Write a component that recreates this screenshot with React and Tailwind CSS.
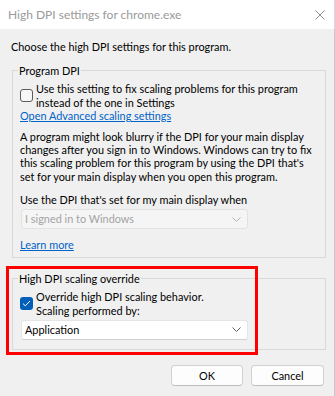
import React from "react";

const Chevron = ({ color }) => (
  <svg width="9" height="5" viewBox="0 0 9 5" fill="none">
    <path d="M0.5 0.5 L4.5 4.5 L8.5 0.5" stroke={color} strokeWidth="1" />
  </svg>
);

const Checkbox = ({ checked }) =>
  checked ? (
    <span className="flex h-[13px] w-[13px] shrink-0 items-center justify-center rounded-[3px] bg-[#005fb8]">
      <svg width="9" height="7" viewBox="0 0 9 7" fill="none">
        <path d="M1 3.6 L3.3 5.8 L8 1" stroke="#ffffff" strokeWidth="1" />
      </svg>
    </span>
  ) : (
    <span className="h-[13px] w-[13px] shrink-0 rounded-[3px] border border-[#5c5c5c] bg-[#f7f7f7]" />
  );

const GroupBox = ({ title, className, children }) => (
  <fieldset
    className={`ml-[12px] w-[314px] border border-[#d9d9d9] px-[7px] ${className}`}
  >
    <legend className="-ml-[2px] px-px text-black">{title}</legend>
    {children}
  </fieldset>
);

const App = () => {
  return (
    <div className="relative h-[396px] w-[335px] overflow-hidden bg-[#f0f0f0] font-['Lato',sans-serif] text-[10.9px] leading-[13.2px] text-black">
      <div className="flex h-[29px] items-center justify-between border-r border-[#dadada] bg-white pl-[8px] pr-[9px]">
        <span className="text-[12px] text-[#9a9a9a]">High DPI settings for chrome.exe</span>
        <svg width="10" height="10" viewBox="0 0 10 10" fill="none">
          <path d="M0.5 0.5 L9.5 9.5 M9.5 0.5 L0.5 9.5" stroke="#8f8f8f" strokeWidth="1" />
        </svg>
      </div>

      <div className="h-[367px] rounded-bl-[7px] border-r border-[#c9c9c9] pt-[11px]">
        <p className="pl-[11px]">Choose the high DPI settings for this program.</p>

        <GroupBox title="Program DPI" className="mt-[11px] pb-[6px]">
          <div className="mt-[5px] flex items-center gap-[3px]">
            <Checkbox />
            <span>
              Use this setting to fix scaling problems for this program
              <br />
              instead of the one in Settings
            </span>
          </div>
          <a className="block w-fit text-[#0063c9] underline">Open Advanced scaling settings</a>
          <p className="mt-[8px] pr-[2px]">
            A program might look blurry if the DPI for your main display changes after you sign in to Windows. Windows can try to fix this scaling problem for this program by using the DPI that's set for your main display when you open this program.
          </p>
          <p className="mt-[10px]">Use the DPI that's set for my main display when</p>
          <div className="ml-px mt-[3px] flex h-[20px] w-[227px] items-center justify-between rounded-[3px] border border-[#e2e2e2] bg-[#f5f5f5] pl-[3px] pr-[6px] text-[#a3a3a3]">
            <span>I signed in to Windows</span>
            <Chevron color="#b5b5b5" />
          </div>
          <a className="mt-[9px] block w-fit text-[#0063c9] underline">Learn more</a>
        </GroupBox>

        <GroupBox title="High DPI scaling override" className="mt-[14px] pb-[9px]">
          <div className="mt-[5px] flex items-center gap-[3px]">
            <Checkbox checked />
            <span>
              Override high DPI scaling behavior.
              <br />
              Scaling performed by:
            </span>
          </div>
          <div className="ml-px mt-[3px] flex h-[20px] w-[227px] items-center justify-between rounded-[3px] border border-[#e5e5e5] border-b-[#d0d0d0] bg-white pl-[3px] pr-[6px]">
            <span>Application</span>
            <Chevron color="#5f5f5f" />
          </div>
        </GroupBox>

        <div className="mt-[15px] flex justify-end gap-[8px] pr-[10px]">
          <button className="flex h-[21px] w-[72px] items-center justify-center rounded-[4px] border border-[#d1d1d1] border-b-[#bcbcbc] bg-[#fdfdfd] text-black">
            OK
          </button>
          <button className="flex h-[21px] w-[73px] items-center justify-center rounded-[4px] border border-[#d1d1d1] border-b-[#bcbcbc] bg-[#fdfdfd] text-black">
            Cancel
          </button>
        </div>
      </div>

      <div className="pointer-events-none absolute left-[6px] top-[266px] h-[89px] w-[252px] border-[3px] border-[#ff0000]" />
    </div>
  );
};

export default App;
